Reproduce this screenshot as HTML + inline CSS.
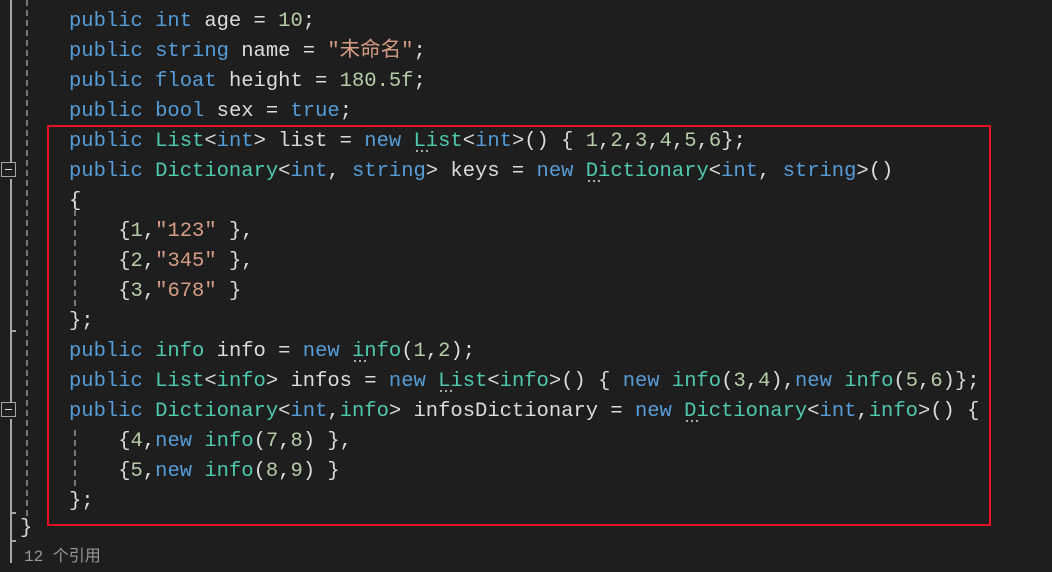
<!DOCTYPE html>
<html><head><meta charset="utf-8"><style>
body{margin:0;width:1052px;height:552px;background:#1e1e1e;overflow:hidden;position:relative;font-family:"Liberation Mono","Noto Sans CJK SC",monospace;font-size:20.5px;color:#dcdcdc}
.l{position:absolute;left:69px;white-space:pre;line-height:30px;height:30px;margin-top:2px}
.k{color:#569cd6}.t{color:#4ec9b0}.n{color:#b5cea8}.s{color:#d69d85}
.d{position:relative}
.d::after{content:"";position:absolute;left:2px;top:20px;width:14px;height:2px;background:repeating-linear-gradient(90deg,#aaa 0 2px,transparent 2px 5px)}
.box{position:absolute;left:47px;top:125px;width:940px;height:397px;border:2px solid #e81123}
.v{position:absolute;background:#a5a5a5}
.dash{position:absolute;width:2px;background:repeating-linear-gradient(180deg,#777 0 6px,transparent 6px 10px)}
.fold{position:absolute;left:1px;width:13px;height:13px;border:1px solid #a5a5a5;background:#1e1e1e}
.fold::after{content:"";position:absolute;left:3px;top:6px;width:7px;height:1px;background:#ddd}
</style></head><body>
<div class="v" style="left:10px;top:0;width:2px;height:163px"></div>
<div class="v" style="left:10px;top:179px;width:2px;height:224px"></div>
<div class="v" style="left:10px;top:330px;width:6px;height:2px"></div>
<div class="v" style="left:10px;top:419px;width:2px;height:144px"></div>
<div class="v" style="left:10px;top:512px;width:6px;height:2px"></div>
<div class="v" style="left:10px;top:540px;width:6px;height:2px"></div>
<div class="dash" style="left:26px;top:0;height:520px"></div>
<div class="dash" style="left:74px;top:200px;height:110px"></div>
<div class="dash" style="left:74px;top:430px;height:60px"></div>
<div class="fold" style="top:162px"></div>
<div class="fold" style="top:402px"></div>
<div class="box"></div>
<div class="l" style="top:5px"><span class="k">public</span> <span class="k">int</span> age = <span class="n">10</span>;</div>
<div class="l" style="top:35px"><span class="k">public</span> <span class="k">string</span> name = <span class="s">"未命名"</span>;</div>
<div class="l" style="top:65px"><span class="k">public</span> <span class="k">float</span> height = <span class="n">180.5f</span>;</div>
<div class="l" style="top:95px"><span class="k">public</span> <span class="k">bool</span> sex = <span class="k">true</span>;</div>
<div class="l" style="top:125px"><span class="k">public</span> <span class="t">List</span>&lt;<span class="k">int</span>&gt; list = <span class="k">new</span> <span class="t d">List</span>&lt;<span class="k">int</span>&gt;() { <span class="n">1</span>,<span class="n">2</span>,<span class="n">3</span>,<span class="n">4</span>,<span class="n">5</span>,<span class="n">6</span>};</div>
<div class="l" style="top:155px"><span class="k">public</span> <span class="t">Dictionary</span>&lt;<span class="k">int</span>, <span class="k">string</span>&gt; keys = <span class="k">new</span> <span class="t d">Dictionary</span>&lt;<span class="k">int</span>, <span class="k">string</span>&gt;()</div>
<div class="l" style="top:185px">{</div>
<div class="l" style="top:215px">    {<span class="n">1</span>,<span class="s">"123"</span> },</div>
<div class="l" style="top:245px">    {<span class="n">2</span>,<span class="s">"345"</span> },</div>
<div class="l" style="top:275px">    {<span class="n">3</span>,<span class="s">"678"</span> }</div>
<div class="l" style="top:305px">};</div>
<div class="l" style="top:335px"><span class="k">public</span> <span class="t">info</span> info = <span class="k">new</span> <span class="t d">info</span>(<span class="n">1</span>,<span class="n">2</span>);</div>
<div class="l" style="top:365px"><span class="k">public</span> <span class="t">List</span>&lt;<span class="t">info</span>&gt; infos = <span class="k">new</span> <span class="t d">List</span>&lt;<span class="t">info</span>&gt;() { <span class="k">new</span> <span class="t">info</span>(<span class="n">3</span>,<span class="n">4</span>),<span class="k">new</span> <span class="t">info</span>(<span class="n">5</span>,<span class="n">6</span>)};</div>
<div class="l" style="top:395px"><span class="k">public</span> <span class="t">Dictionary</span>&lt;<span class="k">int</span>,<span class="t">info</span>&gt; infosDictionary = <span class="k">new</span> <span class="t d">Dictionary</span>&lt;<span class="k">int</span>,<span class="t">info</span>&gt;() {</div>
<div class="l" style="top:425px">    {<span class="n">4</span>,<span class="k">new</span> <span class="t">info</span>(<span class="n">7</span>,<span class="n">8</span>) },</div>
<div class="l" style="top:455px">    {<span class="n">5</span>,<span class="k">new</span> <span class="t">info</span>(<span class="n">8</span>,<span class="n">9</span>) }</div>
<div class="l" style="top:485px">};</div>
<div class="l" style="top:512px;left:20px">}</div>
<div class="l" style="top:540px;left:24px;color:#999;font-size:16px">12 个引用</div>
</body></html>
